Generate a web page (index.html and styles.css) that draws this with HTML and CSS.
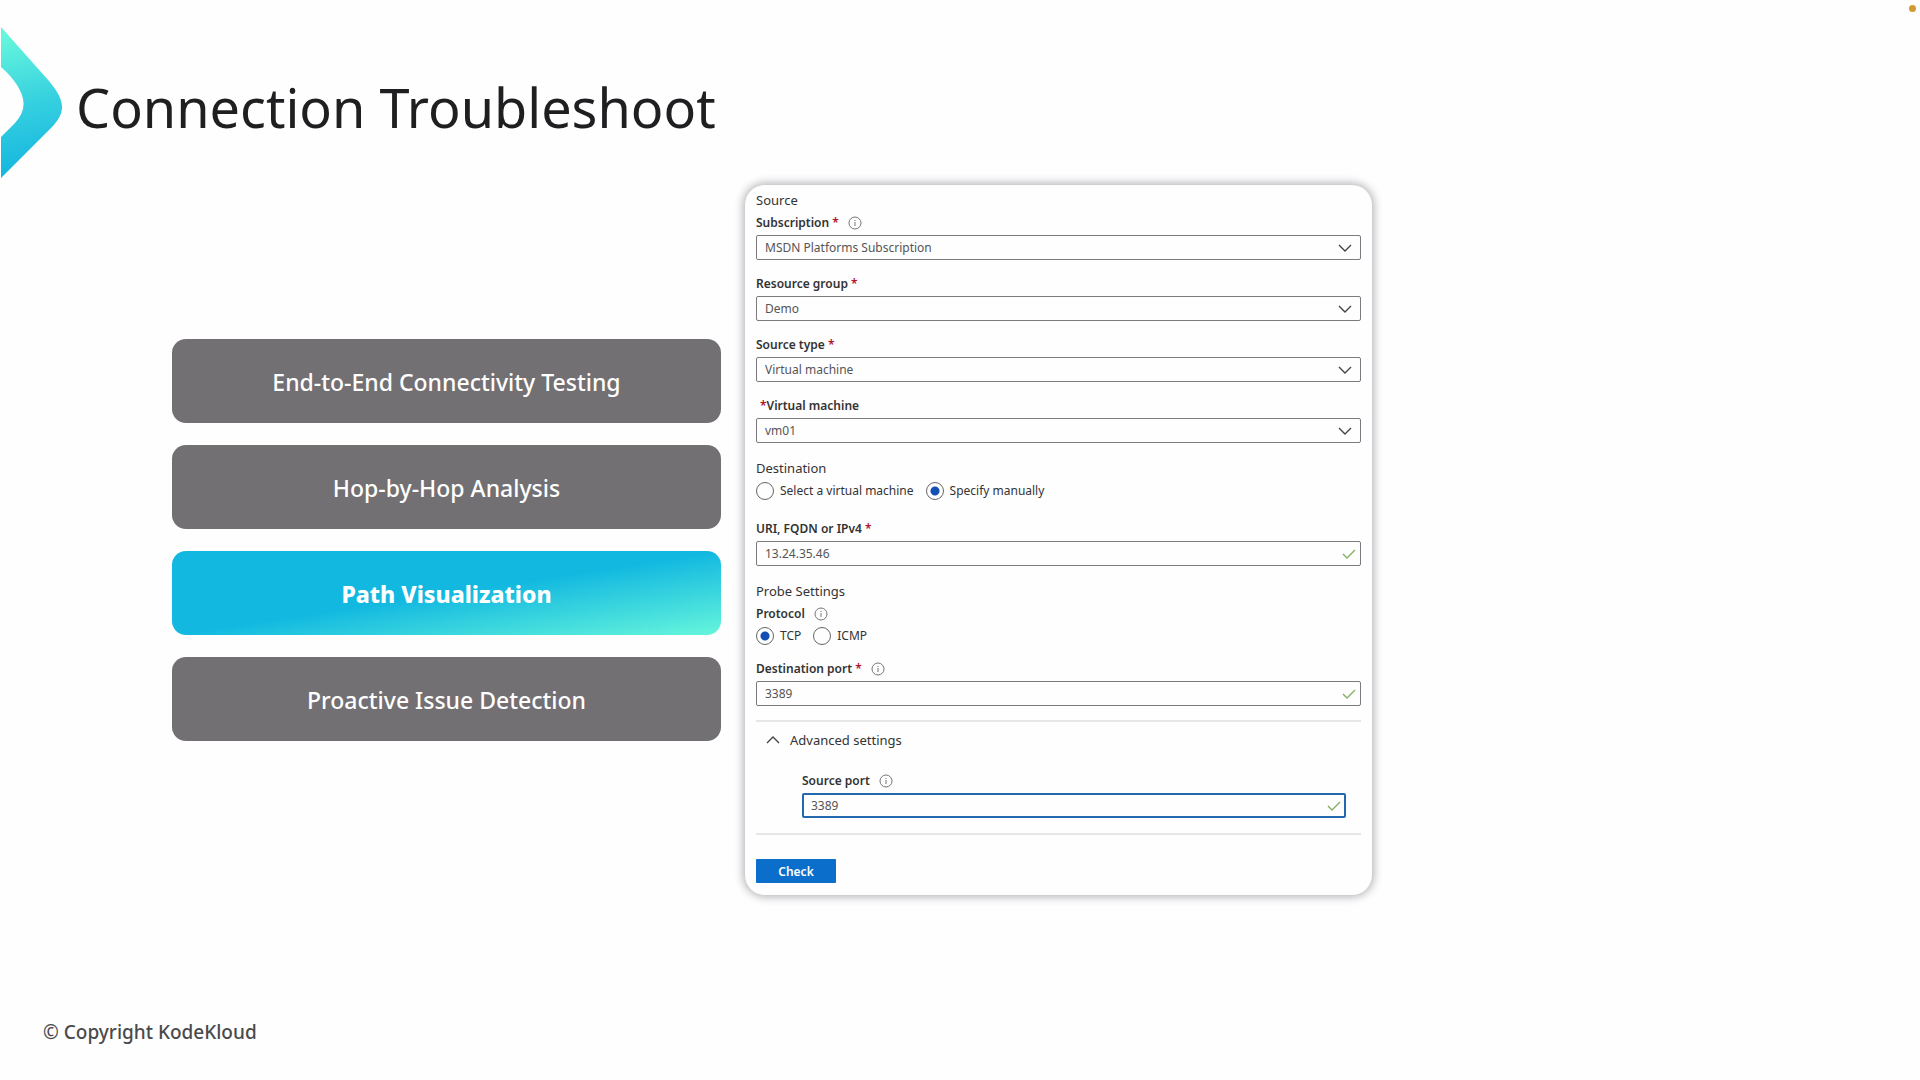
FILE: index.html
```
<!DOCTYPE html>
<html lang="en">
<head>
    <meta charset="UTF-8">
    <meta name="viewport" content="width=device-width, initial-scale=1.0">
    <title>Connection Troubleshoot</title>
    <link rel="stylesheet" href="styles.css">
</head>
<body>
<!-- shared icons -->
<svg class="defs" aria-hidden="true">
    <symbol id="down" viewBox="0 0 14 8"><path d="M1 1l6 6 6-6"/></symbol>
    <symbol id="up" viewBox="0 0 14 8"><path d="M1 7l6-6 6 6"/></symbol>
    <symbol id="check" viewBox="0 0 14 10"><path d="M1 5l4 4 8-8"/></symbol>
    <symbol id="info" viewBox="0 0 14 14"><circle cx="7" cy="7" r="6"/><path d="M7 6v4M7 4v1"/></symbol>
</svg>
<span class="dot"></span>
<header>
    <svg class="arrow" viewBox="0 0 62 152" aria-hidden="true">
        <linearGradient id="arrowFill" gradientUnits="userSpaceOnUse" x1="0" y1="10" x2="30" y2="150">
            <stop offset="0" stop-color="#66f6dc"/>
            <stop offset="0.5" stop-color="#35d0e0"/>
            <stop offset="1" stop-color="#12b4de"/>
        </linearGradient>
        <path fill="url(#arrowFill)" d="M1 0L49 54C66 74 66 86 51 101L1 151V110L15 96C26 84 26 72 17 58C13 52 8 46 1 40Z"/>
    </svg>
    <h1>Connection Troubleshoot</h1>
</header>
<main>
    <ul class="topics">
        <li>End-to-End Connectivity Testing</li>
        <li>Hop-by-Hop Analysis</li>
        <li class="on">Path Visualization</li>
        <li>Proactive Issue Detection</li>
    </ul>
    <form class="card">
        <h2>Source</h2>
        <div class="field">
            <div class="label"><label for="subscription">Subscription <i>*</i></label><svg class="info"><use href="#info"/></svg></div>
            <div class="control">
                <select id="subscription"><option>MSDN Platforms Subscription</option></select>
                <svg class="down"><use href="#down"/></svg>
            </div>
        </div>
        <div class="field">
            <div class="label"><label for="group">Resource group <i>*</i></label></div>
            <div class="control">
                <select id="group"><option>Demo</option></select>
                <svg class="down"><use href="#down"/></svg>
            </div>
        </div>
        <div class="field">
            <div class="label"><label for="type">Source type <i>*</i></label></div>
            <div class="control">
                <select id="type"><option>Virtual machine</option></select>
                <svg class="down"><use href="#down"/></svg>
            </div>
        </div>
        <div class="field">
            <div class="label indent"><label for="vm"><i>*</i>Virtual machine</label></div>
            <div class="control">
                <select id="vm"><option>vm01</option></select>
                <svg class="down"><use href="#down"/></svg>
            </div>
        </div>
        <h2 id="destination">Destination</h2>
        <div class="radios" role="radiogroup" aria-labelledby="destination">
            <label><input type="radio" name="dest">Select a virtual machine</label>
            <label><input type="radio" name="dest" checked>Specify manually</label>
        </div>
        <div class="field">
            <div class="label"><label for="uri">URI, FQDN or IPv4 <i>*</i></label></div>
            <div class="control">
                <input type="text" id="uri" value="13.24.35.46">
                <svg class="check"><use href="#check"/></svg>
            </div>
        </div>
        <h2>Probe Settings</h2>
        <div class="label"><span id="protocol">Protocol</span><svg class="info"><use href="#info"/></svg></div>
        <div class="radios protocol" role="radiogroup" aria-labelledby="protocol">
            <label><input type="radio" name="protocol" checked>TCP</label>
            <label><input type="radio" name="protocol">ICMP</label>
        </div>
        <div class="field">
            <div class="label"><label for="port">Destination port <i>*</i></label><svg class="info"><use href="#info"/></svg></div>
            <div class="control">
                <input type="text" id="port" value="3389">
                <svg class="check"><use href="#check"/></svg>
            </div>
        </div>
        <section class="advanced">
            <button type="button" class="toggle"><svg class="up"><use href="#up"/></svg>Advanced settings</button>
            <div class="field">
                <div class="label"><label for="srcport">Source port</label><svg class="info"><use href="#info"/></svg></div>
                <div class="control">
                    <input type="text" id="srcport" class="active" value="3389">
                    <svg class="check"><use href="#check"/></svg>
                </div>
            </div>
        </section>
        <button type="button" class="submit">Check</button>
    </form>
</main>
<footer>© Copyright KodeKloud</footer>
</body>
</html>
```
FILE: styles.css
```
* {margin:0; padding:0; box-sizing:border-box; list-style:none;}
body {min-height:100vh; display:grid; grid-template-rows:185px 1fr 185px; position:relative; background:#fefefe; color:#1f1f21; font-family:"Noto Sans", sans-serif;}
svg {display:block; flex:none; fill:none;}
.defs {position:absolute; width:0; height:0;}
.dot {position:absolute; top:5px; right:4px; width:7px; height:7px; border-radius:50%; background:#d29a2e;}

header {display:flex; gap:14px; padding-top:27px;}
.arrow {width:62px; height:152px;}
h1 {padding-top:38px; font-size:54px; font-weight:450; line-height:84px;}

main {display:grid; grid-template-columns:549fr 627fr 524fr; gap:24px; align-items:center; padding-left:172px;}
.topics {display:flex; flex-direction:column; gap:22px;}
.topics li {padding:25px 24px 23px; border-radius:14px; background:#727073; color:#fff; font-size:23px; font-weight:500; line-height:36px; text-align:center;}
.topics .on {background:linear-gradient(to bottom right, #12b8e0 50%, #66f6dc); font-weight:800;}

.card {display:flex; flex-direction:column; padding:4px 11px 12px; border-radius:20px; background:#fefefe; box-shadow:0 0 8px 2px #b5b2b8; color:#333; font-size:12px; line-height:20px;}
h2 {margin:1px 0 3px; font-size:13px; font-weight:400; line-height:20px;}
i {color:#b0122f; font-style:normal;}
.label {display:flex; align-items:center; gap:9px; font-weight:600;}
.label.indent {padding-left:4px;}
.info {width:14px; height:14px; stroke:#77757a;}
.field {margin-bottom:14px;}
.control {position:relative; margin-top:2px;}
select, input[type=text] {display:block; width:100%; height:25px; padding:0 8px; appearance:none; border:1px solid #7c7a7e; border-radius:2px; background:#fefefe; color:#555; font:12px "Noto Sans", sans-serif;}
input.active {border:2px solid #2468ae; padding:0 7px;}
.control svg {position:absolute; pointer-events:none;}
.down {top:9px; right:9px; width:14px; height:8px; stroke:#444; stroke-width:1.4;}
.check {top:8px; right:5px; width:14px; height:10px; stroke:#84b162; stroke-width:1.4;}
.radios {display:flex; gap:12px; margin-bottom:18px;}
.radios label {display:flex; align-items:center; gap:6px;}
.radios.protocol {margin:2px 0 13px;}
input[type=radio] {width:18px; height:18px; appearance:none; border:1px solid #666; border-radius:50%;}
input[type=radio]:checked {background:radial-gradient(circle, #134fb4 4px, transparent 5px);}
.advanced {padding:8px 15px 15px 46px; border:solid #e6e5e7; border-width:2px 0;}
.advanced .field {margin:21px 0 0;}
.toggle {display:flex; align-items:center; gap:10px; margin-left:-36px; border:0; background:none; color:#333; font:13px/20px "Noto Sans", sans-serif;}
.up {width:14px; height:8px; stroke:#444; stroke-width:1.4;}
.submit {align-self:flex-start; width:80px; height:24px; margin-top:24px; border:0; border-radius:1px; background:#0b6ecb; color:#fff; font:600 12px "Noto Sans", sans-serif;}

footer {align-self:end; padding:0 43px 33px; color:#4a4a4c; font-size:19px; font-weight:500; line-height:30px;}
```
